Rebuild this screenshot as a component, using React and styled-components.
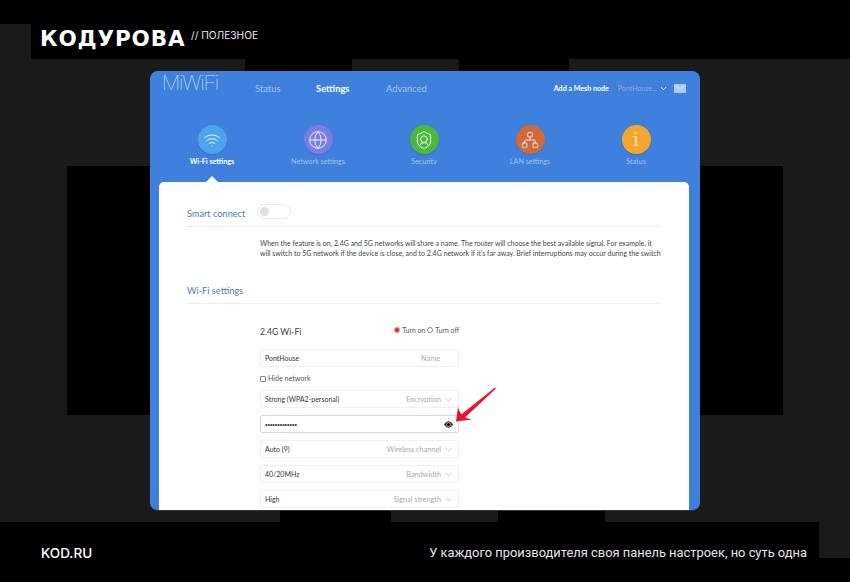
import React from 'react';
import styled, {createGlobalStyle} from 'styled-components';
import {ChevronDown, Globe, Network, ShieldUser, Wifi} from 'lucide-react';

const GlobalStyle = createGlobalStyle`
  html, body {
    margin: 0;
    padding: 0;
    background: #000;
  }
  * {
    box-sizing: border-box;
  }
`;

// grey squares of the backdrop: x, y, width, height
const TILES = [
    [0, 24, 31, 35],
    [0, 59, 245, 107],
    [352, 59, 107, 107],
    [569, 59, 281, 107],
    [0, 166, 67, 249],
    [783, 166, 67, 249],
    [0, 415, 280, 107],
    [391, 415, 107, 107],
    [605, 415, 245, 107],
    [819, 522, 31, 36],
];

const tilesBackground = TILES
    .map(([x, y, w, h]) => `linear-gradient(#1a1a1a, #1a1a1a) ${x}px ${y}px / ${w}px ${h}px no-repeat`)
    .join(', ');

const Page = styled.div`
  width: 850px;
  height: 582px;
  display: flex;
  flex-direction: column;
  overflow: hidden;
  background: ${tilesBackground}, #000;
  font-family: Lato, sans-serif;
`;

const Header = styled.header`
  height: 59px;
  flex: none;
  display: flex;
  align-items: flex-start;
  padding: 26px 0 0 40px;
  color: #fff;
`;

const Brand = styled.div`
  font-family: "DejaVu Sans", sans-serif;
  font-size: 21.5px;
  line-height: 26px;
  font-weight: 700;
  letter-spacing: 0.85px;
  width: 151px;
`;

const Rubric = styled.div`
  font-family: Inter, sans-serif;
  font-size: 10.2px;
  line-height: 18px;
  color: #e8e8e8;
`;

const Stage = styled.main`
  flex: 1;
  min-height: 0;
  display: flex;
  padding: 12px 150px 11px;
`;

const Panel = styled.section`
  flex: 1;
  display: flex;
  flex-direction: column;
  overflow: hidden;
  background: #3e80dc;
  border-radius: 8px;
  border-bottom: 1px solid #30343c;
`;

const NavBar = styled.nav`
  height: 34px;
  flex: none;
  display: flex;
  align-items: center;
  padding: 0 14px 0 12px;
`;

const Logo = styled.div`
  width: 93px;
  font-family: Roboto, sans-serif;
  font-size: 21px;
  font-weight: 100;
  line-height: 22px;
  letter-spacing: -1px;
  color: #d6e6fb;
  margin-top: -11px;
`;

const NavLink = styled.a`
  width: ${props => props.$width}px;
  font-size: 9.4px;
  font-weight: ${props => (props.$active ? 700 : 400)};
  color: ${props => (props.$active ? '#fff' : '#a5c6f0')};
`;

const NavRight = styled.div`
  margin-left: auto;
  display: flex;
  align-items: center;
`;

const MeshLink = styled.a`
  font-size: 7.1px;
  font-weight: 700;
  color: #fff;
  margin-right: 9px;
`;

const RouterName = styled.span`
  font-size: 7px;
  color: #86afe8;
  margin-right: 2px;
`;

const MailIcon = styled.svg`
  width: 12px;
  height: 9px;
  margin-left: 6px;
  display: block;
`;

const Tabs = styled.div`
  flex: none;
  height: 57px;
  margin: 20px 11px 0 9px;
  display: grid;
  grid-template-columns: repeat(5, 1fr);
`;

const Tab = styled.div`
  position: relative;
  display: flex;
  flex-direction: column;
  align-items: center;
  font-size: 7.2px;
  font-weight: ${props => (props.$active ? 700 : 400)};
  color: ${props => (props.$active ? '#fff' : '#9fc2ef')};

  ${props => props.$active && `
    &::after {
      content: '';
      position: absolute;
      left: 50%;
      bottom: 0;
      margin-left: -6px;
      border: 6px solid transparent;
      border-top: 0;
      border-bottom-color: #fff;
    }
  `}
`;

const TabCircle = styled.div`
  width: 29px;
  height: 29px;
  margin-bottom: 3px;
  border-radius: 50%;
  display: flex;
  align-items: center;
  justify-content: center;
  background: ${props => props.$color};
  color: #eaf3ff;
  box-shadow: 0 1px 1px rgba(30, 70, 130, 0.25);
`;

const InfoGlyph = styled.span`
  font-family: "DejaVu Serif", serif;
  font-size: 18px;
  line-height: 1;
  color: #fde6b4;
`;

const Card = styled.div`
  flex: 1;
  min-height: 0;
  margin: 0 11px 0 9px;
  padding: 0 29px 0 27px;
  background: #fff;
  border-radius: 5px 5px 0 0;
  overflow: hidden;
`;

const SectionHead = styled.div`
  display: flex;
  align-items: center;
  height: ${props => props.$height}px;
  padding-top: ${props => props.$top}px;
  border-bottom: 1px solid #edf0f3;
  font-size: 9.2px;
  color: #4e79b8;
`;

const SectionTitle = styled.div`
  width: 70px;
  margin: 3px 0 0 1px;
`;

const Toggle = styled.div`
  width: 34px;
  height: 15px;
  padding: 2px;
  border: 1px solid #e9e9e9;
  border-radius: 8px;
  background: #fff;

  &::before {
    content: '';
    display: block;
    width: 9px;
    height: 9px;
    border-radius: 50%;
    background: #dedede;
  }
`;

const Hint = styled.p`
  margin: 11px 0 0 74px;
  font-size: 7px;
  line-height: 10px;
  color: #444;
  white-space: nowrap;
`;

const Form = styled.div`
  width: 199px;
  margin-left: 74px;
`;

const FormHead = styled.div`
  display: flex;
  align-items: center;
  justify-content: space-between;
  height: 45px;
  padding-top: 10px;
`;

const FormTitle = styled.div`
  font-size: 8.6px;
  color: #3c3c3c;
`;

const RadioGroup = styled.div`
  display: flex;
  align-items: center;
  margin-top: -3px;
  font-size: 6.9px;
  color: #555;
`;

const Radio = styled.span`
  width: 6px;
  height: 6px;
  margin: 0 2px 0 2px;
  border-radius: 50%;
  border: 1px solid ${props => (props.$on ? '#ee8a85' : '#888')};
  background: ${props => (props.$on ? '#e02d26' : '#fff')};
`;

const Field = styled.div`
  position: relative;
  height: 18px;
  margin-bottom: ${props => props.$gap ?? 7}px;
  padding: 0 4px 0 4px;
  display: flex;
  align-items: center;
  font-size: 7px;
  color: #333;
  border: 1px solid ${props => (props.$focused ? '#c9daf3' : '#f0f0f0')};
  border-radius: 2px;
`;

const FieldLabel = styled.span`
  margin-left: auto;
  padding-right: ${props => (props.$plain ? 14 : 0)}px;
  font-size: 7.3px;
  color: #aaa;
`;

const FieldChevron = styled(ChevronDown)`
  margin-left: 2px;
  color: #999;
`;

const Dots = styled.span`
  font-family: "Liberation Sans", sans-serif;
  font-size: 7px;
`;

const EyeIcon = styled.svg`
  margin-left: auto;
  margin-right: 1px;
  width: 9px;
  height: 7px;
`;

const CheckRow = styled.label`
  height: 13px;
  margin-bottom: 5px;
  display: flex;
  align-items: center;
  font-size: 7.1px;
  color: #555;
`;

const CheckBox = styled.span`
  width: 6px;
  height: 6px;
  margin-right: 2px;
  border: 1px solid #888;
  border-radius: 1px;
`;

const ArrowMark = styled.svg`
  position: absolute;
  left: 193px;
  top: -30px;
  width: 44px;
  height: 40px;
  overflow: visible;
  z-index: 2;
`;

const Footer = styled.footer`
  height: 60px;
  flex: none;
  display: flex;
  align-items: flex-start;
  justify-content: space-between;
  padding: 21px 43px 0 41px;
  color: #fff;
  font-family: Inter, sans-serif;
`;

const Site = styled.div`
  font-size: 13.5px;
  font-weight: 500;
  line-height: 20px;
`;

const Caption = styled.div`
  font-family: Roboto, sans-serif;
  font-size: 12.9px;
  line-height: 20px;
  color: #e6e6e6;
`;

const TAB_ITEMS = [
    {name: 'Wi-Fi settings', color: '#4fa3ee', icon: <Wifi size={18} strokeWidth={1.3}/>, active: true},
    {name: 'Network settings', color: '#7a7de6', icon: <Globe size={20} strokeWidth={1.2}/>},
    {name: 'Security', color: '#4cb93c', icon: <ShieldUser size={20} strokeWidth={1.2}/>},
    {name: 'LAN settings', color: '#cf6a3a', icon: <Network size={18} strokeWidth={1.2}/>},
    {name: 'Status', color: '#f5a62e', icon: <InfoGlyph>i</InfoGlyph>},
];

const SelectField = ({value, label}) => (
    <Field>
        {value}
        <FieldLabel>{label}</FieldLabel>
        <FieldChevron size={11} strokeWidth={1.2}/>
    </Field>
);

export default function App() {
    return (
        <Page>
            <GlobalStyle/>
            <Header>
                <Brand>КОДУРОВА</Brand>
                <Rubric>// ПОЛЕЗНОЕ</Rubric>
            </Header>

            <Stage>
                <Panel>
                    <NavBar>
                        <Logo>MiWiFi</Logo>
                        <NavLink $width={61}>Status</NavLink>
                        <NavLink $width={70} $active>Settings</NavLink>
                        <NavLink $width={60}>Advanced</NavLink>
                        <NavRight>
                            <MeshLink>Add a Mesh node</MeshLink>
                            <RouterName>PontHouse...</RouterName>
                            <ChevronDown size={9} color="#fff" strokeWidth={2.4}/>
                            <MailIcon viewBox="0 0 12 9">
                                <rect width="12" height="9" rx="0.6" fill="#a9cbf5"/>
                                <path d="M0 1l6 4 6-4" fill="none" stroke="#dcebfd" strokeWidth="0.9"/>
                            </MailIcon>
                        </NavRight>
                    </NavBar>

                    <Tabs>
                        {TAB_ITEMS.map(tab => (
                            <Tab key={tab.name} $active={tab.active}>
                                <TabCircle $color={tab.color}>{tab.icon}</TabCircle>
                                {tab.name}
                            </Tab>
                        ))}
                    </Tabs>

                    <Card>
                        <SectionHead $height={45} $top={15}>
                            <SectionTitle>Smart connect</SectionTitle>
                            <Toggle/>
                        </SectionHead>
                        <Hint>
                            When the feature is on, 2.4G and 5G networks will share a name. The router will choose the best available signal. For example, it<br/>
                            will switch to 5G network if the device is close, and to 2.4G network if it's far away. Brief interruptions may occur during the switch
                        </Hint>
                        <SectionHead $height={46} $top={16}>
                            <SectionTitle>Wi-Fi settings</SectionTitle>
                        </SectionHead>

                        <Form>
                            <FormHead>
                                <FormTitle>2.4G Wi-Fi</FormTitle>
                                <RadioGroup>
                                    <Radio $on/>Turn on<Radio/>Turn off
                                </RadioGroup>
                            </FormHead>
                            <Field $gap={5}>
                                PontHouse
                                <FieldLabel $plain>Name</FieldLabel>
                            </Field>
                            <CheckRow><CheckBox/>Hide network</CheckRow>
                            <SelectField value="Strong (WPA2-personal)" label="Encryption"/>
                            <Field $focused>
                                <Dots>•••••••••••••</Dots>
                                <EyeIcon viewBox="0 0 18 14">
                                    <path d="M0 7C3 2 6 .5 9 .5S15 2 18 7c-3 5-6 6.5-9 6.5S3 12 0 7z" fill="#333"/>
                                    <circle cx="9" cy="7" r="4" fill="#000" stroke="#fff" strokeWidth="1.2"/>
                                </EyeIcon>
                                <ArrowMark viewBox="0 0 44 40">
                                    <path d="M41 1.5L42 2.5 9.5 33 6 29.5z" fill="#e8152a"/>
                                    <path d="M4 21L2 35.5 18 33.5C13 32.5 10 31 8.5 29.5 7 28 5 25 4 21z" fill="#e8152a"/>
                                </ArrowMark>
                            </Field>
                            <SelectField value="Auto (9)" label="Wireless channel"/>
                            <SelectField value="40/20MHz" label="Bandwidth"/>
                            <SelectField value="High" label="Signal strength"/>
                        </Form>
                    </Card>
                </Panel>
            </Stage>

            <Footer>
                <Site>KOD.RU</Site>
                <Caption>У каждого производителя своя панель настроек, но суть одна</Caption>
            </Footer>
        </Page>
    );
}
